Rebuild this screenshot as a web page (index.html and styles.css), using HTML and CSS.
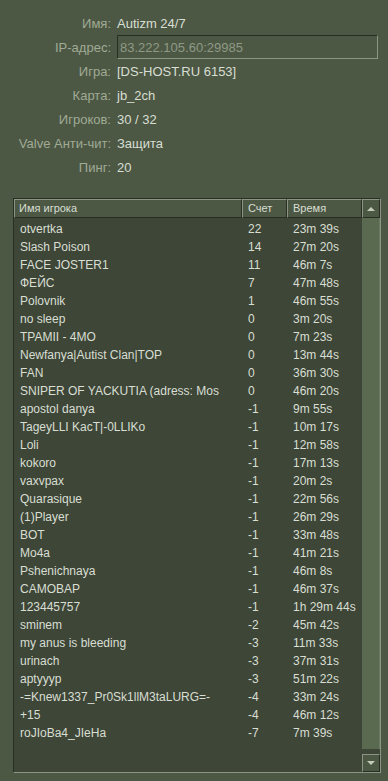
FILE: index.html
```html
<!DOCTYPE html>
<html lang="ru">
<head>
<meta charset="utf-8">
<link rel="stylesheet" href="styles.css">
</head>
<body>
<div class="dialog">
  <div class="info">
    <div class="lbl">Имя:</div><div class="val">Autizm 24/7</div>
    <div class="lbl">IP-адрес:</div><div class="val"><div class="ipbox">83.222.105.60:29985</div></div>
    <div class="lbl">Игра:</div><div class="val">[DS-HOST.RU 6153]</div>
    <div class="lbl">Карта:</div><div class="val">jb_2ch</div>
    <div class="lbl">Игроков:</div><div class="val">30 / 32</div>
    <div class="lbl">Valve Анти-чит:</div><div class="val">Защита</div>
    <div class="lbl">Пинг:</div><div class="val">20</div>
  </div>

  <div class="table">
    <div class="main">
      <div class="head">
        <div class="hc c1">Имя игрока</div>
        <div class="hc c2">Счет</div>
        <div class="hc c3">Время</div>
      </div>
      <div class="rows">
        <div class="row"><span class="c1">otvertka</span><span class="c2">22</span><span class="c3">23m 39s</span></div>
        <div class="row"><span class="c1">Slash Poison</span><span class="c2">14</span><span class="c3">27m 20s</span></div>
        <div class="row"><span class="c1">FACE JOSTER1</span><span class="c2">11</span><span class="c3">46m 7s</span></div>
        <div class="row"><span class="c1">ФЕЙС</span><span class="c2">7</span><span class="c3">47m 48s</span></div>
        <div class="row"><span class="c1">Polovnik</span><span class="c2">1</span><span class="c3">46m 55s</span></div>
        <div class="row"><span class="c1">no sleep</span><span class="c2">0</span><span class="c3">3m 20s</span></div>
        <div class="row"><span class="c1">TPAMII - 4MO</span><span class="c2">0</span><span class="c3">7m 23s</span></div>
        <div class="row"><span class="c1">Newfanya|Autist Clan|TOP</span><span class="c2">0</span><span class="c3">13m 44s</span></div>
        <div class="row"><span class="c1">FAN</span><span class="c2">0</span><span class="c3">36m 30s</span></div>
        <div class="row"><span class="c1">SNIPER OF YACKUTIA (adress: Mos</span><span class="c2">0</span><span class="c3">46m 20s</span></div>
        <div class="row"><span class="c1">apostol danya</span><span class="c2">-1</span><span class="c3">9m 55s</span></div>
        <div class="row"><span class="c1">TageyLLI KacT|-0LLIKo</span><span class="c2">-1</span><span class="c3">10m 17s</span></div>
        <div class="row"><span class="c1">Loli</span><span class="c2">-1</span><span class="c3">12m 58s</span></div>
        <div class="row"><span class="c1">kokoro</span><span class="c2">-1</span><span class="c3">17m 13s</span></div>
        <div class="row"><span class="c1">vaxvpax</span><span class="c2">-1</span><span class="c3">20m 2s</span></div>
        <div class="row"><span class="c1">Quarasique</span><span class="c2">-1</span><span class="c3">22m 56s</span></div>
        <div class="row"><span class="c1">(1)Player</span><span class="c2">-1</span><span class="c3">26m 29s</span></div>
        <div class="row"><span class="c1">BOT</span><span class="c2">-1</span><span class="c3">33m 48s</span></div>
        <div class="row"><span class="c1">Mo4a</span><span class="c2">-1</span><span class="c3">41m 21s</span></div>
        <div class="row"><span class="c1">Pshenichnaya</span><span class="c2">-1</span><span class="c3">46m 8s</span></div>
        <div class="row"><span class="c1">CAMOBAP</span><span class="c2">-1</span><span class="c3">46m 37s</span></div>
        <div class="row"><span class="c1">123445757</span><span class="c2">-1</span><span class="c3">1h 29m 44s</span></div>
        <div class="row"><span class="c1">sminem</span><span class="c2">-2</span><span class="c3">45m 42s</span></div>
        <div class="row"><span class="c1">my anus is bleeding</span><span class="c2">-3</span><span class="c3">11m 33s</span></div>
        <div class="row"><span class="c1">urinach</span><span class="c2">-3</span><span class="c3">37m 31s</span></div>
        <div class="row"><span class="c1">aptyyyp</span><span class="c2">-3</span><span class="c3">51m 22s</span></div>
        <div class="row"><span class="c1">-=Knew1337_Pr0Sk1llM3taLURG=-</span><span class="c2">-4</span><span class="c3">33m 24s</span></div>
        <div class="row"><span class="c1">+15</span><span class="c2">-4</span><span class="c3">46m 12s</span></div>
        <div class="row"><span class="c1">roJIoBa4_JIeHa</span><span class="c2">-7</span><span class="c3">7m 39s</span></div>
      </div>
    </div>
    <div class="scroll">
      <div class="sbtn up"><span class="tri-up"></span></div>
      <div class="track"><div class="thumb"></div></div>
      <div class="sbtn down"><span class="tri-down"></span></div>
    </div>
  </div>
</div>
</body>
</html>
```

FILE: styles.css
```css
html, body {
  margin: 0;
  padding: 0;
  background: #4c5844;
}
body {
  width: 388px;
  height: 781px;
  overflow: hidden;
  font-family: "Liberation Sans", Arial, sans-serif;
  color: #d8ded3;
}
.dialog {
  padding-top: 11px;
}
.info {
  display: grid;
  grid-template-columns: 111px 1fr;
  grid-auto-rows: 24px;
  column-gap: 6px;
  font-size: 13px;
  align-items: center;
}
.lbl {
  text-align: right;
  color: #a0aa95;
}
.val {
  color: #d8ded3;
  display: flex;
  align-items: center;
}
.ipbox {
  box-sizing: border-box;
  width: 261px;
  height: 24px;
  border-top: 1px solid #282e22;
  border-left: 1px solid #282e22;
  border-right: 1px solid #8c9484;
  border-bottom: 1px solid #8c9484;
  color: #8f9986;
  padding-left: 2px;
  display: flex;
  align-items: center;
}
.table {
  margin: 19px 0 0 13px;
  width: 368px;
  height: 575px;
  box-sizing: border-box;
  border-top: 1px solid #282e22;
  border-left: 1px solid #282e22;
  border-right: 1px solid #8c9484;
  border-bottom: 1px solid #8c9484;
  background: #3e4637;
  display: flex;
}
.main {
  width: 348px;
  display: flex;
  flex-direction: column;
}
.head {
  display: flex;
  height: 19px;
}
.hc {
  box-sizing: border-box;
  height: 19px;
  background: #4c5844;
  border-top: 1px solid #8c9484;
  border-left: 1px solid #8c9484;
  border-right: 1px solid #282e22;
  border-bottom: 1px solid #282e22;
  font-size: 11px;
  line-height: 17px;
  color: #d8ded3;
  padding-left: 4px;
  white-space: nowrap;
}
.head .c1 { width: 228px; }
.head .c2 { width: 45px; padding-left: 5px; }
.head .c3 { width: 75px; padding-left: 5px; }
.rows {
  padding-top: 2px;
  font-size: 12px;
  color: #d8ded3;
}
.row {
  display: flex;
  height: 18px;
  line-height: 18px;
  white-space: nowrap;
}
.row span {
  box-sizing: border-box;
  padding-left: 6px;
  overflow: hidden;
}
.row .c1 { width: 228px; }
.row .c2 { width: 45px; }
.row .c3 { width: 75px; }
.scroll {
  width: 18px;
  display: flex;
  flex-direction: column;
}
.sbtn {
  box-sizing: border-box;
  background: #4c5844;
  border-top: 1px solid #8c9484;
  border-left: 1px solid #8c9484;
  border-right: 1px solid #282e22;
  border-bottom: 1px solid #282e22;
  display: flex;
  align-items: center;
  justify-content: center;
}
.up { height: 19px; }
.down { height: 18px; }
.track {
  flex: 1;
  background: #3e4637;
  display: flex;
}
.thumb {
  flex: 1;
  margin-bottom: 5px;
  background: #5a6a50;
  border-right: 1px solid #6c7a62;
}
.tri-up {
  width: 0;
  height: 0;
  border-left: 4px solid transparent;
  border-right: 4px solid transparent;
  border-bottom: 4px solid #c4cbb9;
}
.tri-down {
  width: 0;
  height: 0;
  border-left: 4px solid transparent;
  border-right: 4px solid transparent;
  border-top: 4px solid #c4cbb9;
}
```
